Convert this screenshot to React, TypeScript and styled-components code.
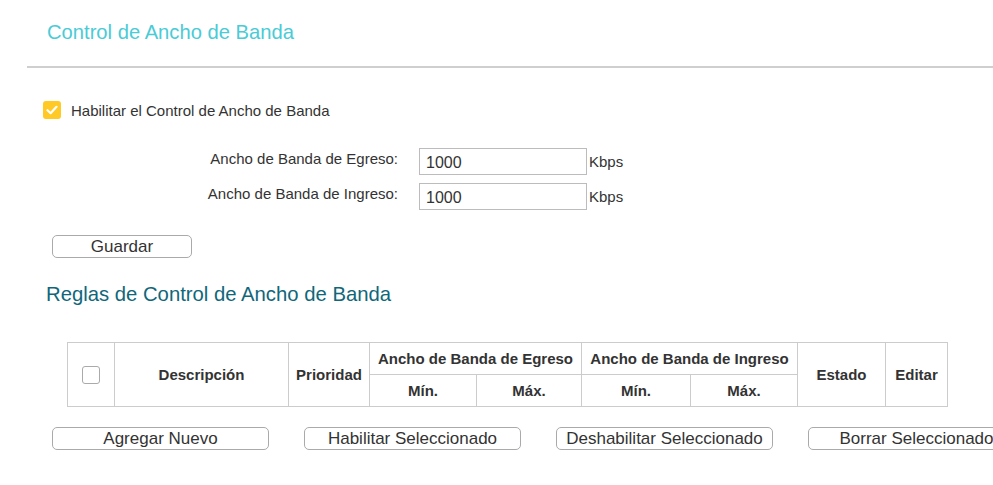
import React from "react";
import styled, { createGlobalStyle } from "styled-components";

const Global = createGlobalStyle`
  html, body { margin: 0; padding: 0; background: #fff; }
  body { font-family: "Liberation Sans", Arial, sans-serif; color: #333; overflow: hidden; }
  * { box-sizing: border-box; }
`;

const Page = styled.div`
  width: 993px;
  height: 485px;
  padding-left: 27px;
  overflow: hidden;
`;

const Title = styled.h1`
  margin: 0;
  padding: 20px 0 0 20px;
  height: 68px;
  font-size: 20.2px;
  line-height: 24px;
  font-weight: normal;
  color: #4acbd6;
  border-bottom: 2px solid #cfcfcf;
`;

const Body = styled.div`
  padding-left: 16px;
`;

const CheckRow = styled.label`
  display: flex;
  align-items: center;
  gap: 10px;
  margin-top: 32px;
  height: 20px;
  font-size: 15px;
  color: #333;
`;

const YellowBox = styled.span`
  width: 18px;
  height: 18px;
  border-radius: 3px;
  background: #ffc926;
  display: flex;
  align-items: center;
  justify-content: center;
`;

const Form = styled.div`
  display: grid;
  grid-template-columns: 239px 168px auto;
  row-gap: 8px;
  margin-top: 28px;
  margin-left: 137px;
  align-items: center;
`;

const FieldLabel = styled.span`
  font-size: 15px;
  text-align: right;
  padding-right: 21px;
  align-self: start;
  padding-top: 2px;
`;

const TextInput = styled.input`
  width: 168px;
  height: 27px;
  border: 1px solid #bcbcbc;
  padding: 2px 6px 0;
  font-family: "Liberation Sans", Arial, sans-serif;
  font-size: 16px;
  color: #333;
  outline: none;
`;

const Unit = styled.span`
  font-size: 15px;
  padding-left: 2px;
`;

const Btn = styled.button<{ $w: number }>`
  width: ${(p) => p.$w}px;
  height: 23px;
  border: 1px solid #aaa;
  border-radius: 5px;
  background: #fff;
  font-family: "Liberation Sans", Arial, sans-serif;
  font-size: 17px;
  color: #333;
  padding: 0;
  line-height: 20px;
  flex-shrink: 0;
  white-space: nowrap;
`;

const SaveWrap = styled.div`
  margin-top: 25px;
  margin-left: 9px;
`;

const SubTitle = styled.h2`
  margin: 24px 0 0 3px;
  font-size: 20.3px;
  line-height: 24px;
  font-weight: normal;
  color: #10677a;
`;

const Table = styled.table`
  margin-top: 36px;
  margin-left: 24px;
  border-collapse: collapse;
  width: 881px;
  font-size: 15px;
  color: #333;
  th {
    border: 1px solid #ccc;
    font-weight: bold;
    text-align: center;
    padding: 0;
    height: 32px;
  }
`;

const EmptyBox = styled.span`
  display: inline-block;
  width: 18px;
  height: 18px;
  border: 1px solid #aaa;
  border-radius: 3px;
  vertical-align: middle;
`;

const ButtonRow = styled.div`
  display: flex;
  gap: 35px;
  margin-top: 20px;
  margin-left: 9px;
`;

export default function App() {
  return (
    <Page>
      <Global />
      <Title>Control de Ancho de Banda</Title>
      <Body>
        <CheckRow>
          <YellowBox>
            <svg width="12" height="10" viewBox="0 0 12 10">
              <path d="M1.5 5.2 L4.6 8.2 L10.5 1.8" stroke="#fff" strokeWidth="2.2" fill="none" strokeLinecap="round" strokeLinejoin="round" />
            </svg>
          </YellowBox>
          Habilitar el Control de Ancho de Banda
        </CheckRow>
        <Form>
          <FieldLabel>Ancho de Banda de Egreso:</FieldLabel>
          <TextInput defaultValue="1000" />
          <Unit>Kbps</Unit>
          <FieldLabel>Ancho de Banda de Ingreso:</FieldLabel>
          <TextInput defaultValue="1000" />
          <Unit>Kbps</Unit>
        </Form>
        <SaveWrap>
          <Btn $w={140}>Guardar</Btn>
        </SaveWrap>
        <SubTitle>Reglas de Control de Ancho de Banda</SubTitle>
        <Table>
          <thead>
            <tr>
              <th rowSpan={2} style={{ width: 47 }}><EmptyBox /></th>
              <th rowSpan={2} style={{ width: 174 }}>Descripción</th>
              <th rowSpan={2} style={{ width: 81 }}>Prioridad</th>
              <th colSpan={2}>Ancho de Banda de Egreso</th>
              <th colSpan={2}>Ancho de Banda de Ingreso</th>
              <th rowSpan={2} style={{ width: 88 }}>Estado</th>
              <th rowSpan={2} style={{ width: 62 }}>Editar</th>
            </tr>
            <tr>
              <th style={{ width: 107 }}>Mín.</th>
              <th style={{ width: 105 }}>Máx.</th>
              <th style={{ width: 109 }}>Mín.</th>
              <th style={{ width: 107 }}>Máx.</th>
            </tr>
          </thead>
        </Table>
        <ButtonRow>
          <Btn $w={217}>Agregar Nuevo</Btn>
          <Btn $w={217}>Habilitar Seleccionado</Btn>
          <Btn $w={217}>Deshabilitar Seleccionado</Btn>
          <Btn $w={217}>Borrar Seleccionado</Btn>
        </ButtonRow>
      </Body>
    </Page>
  );
}
